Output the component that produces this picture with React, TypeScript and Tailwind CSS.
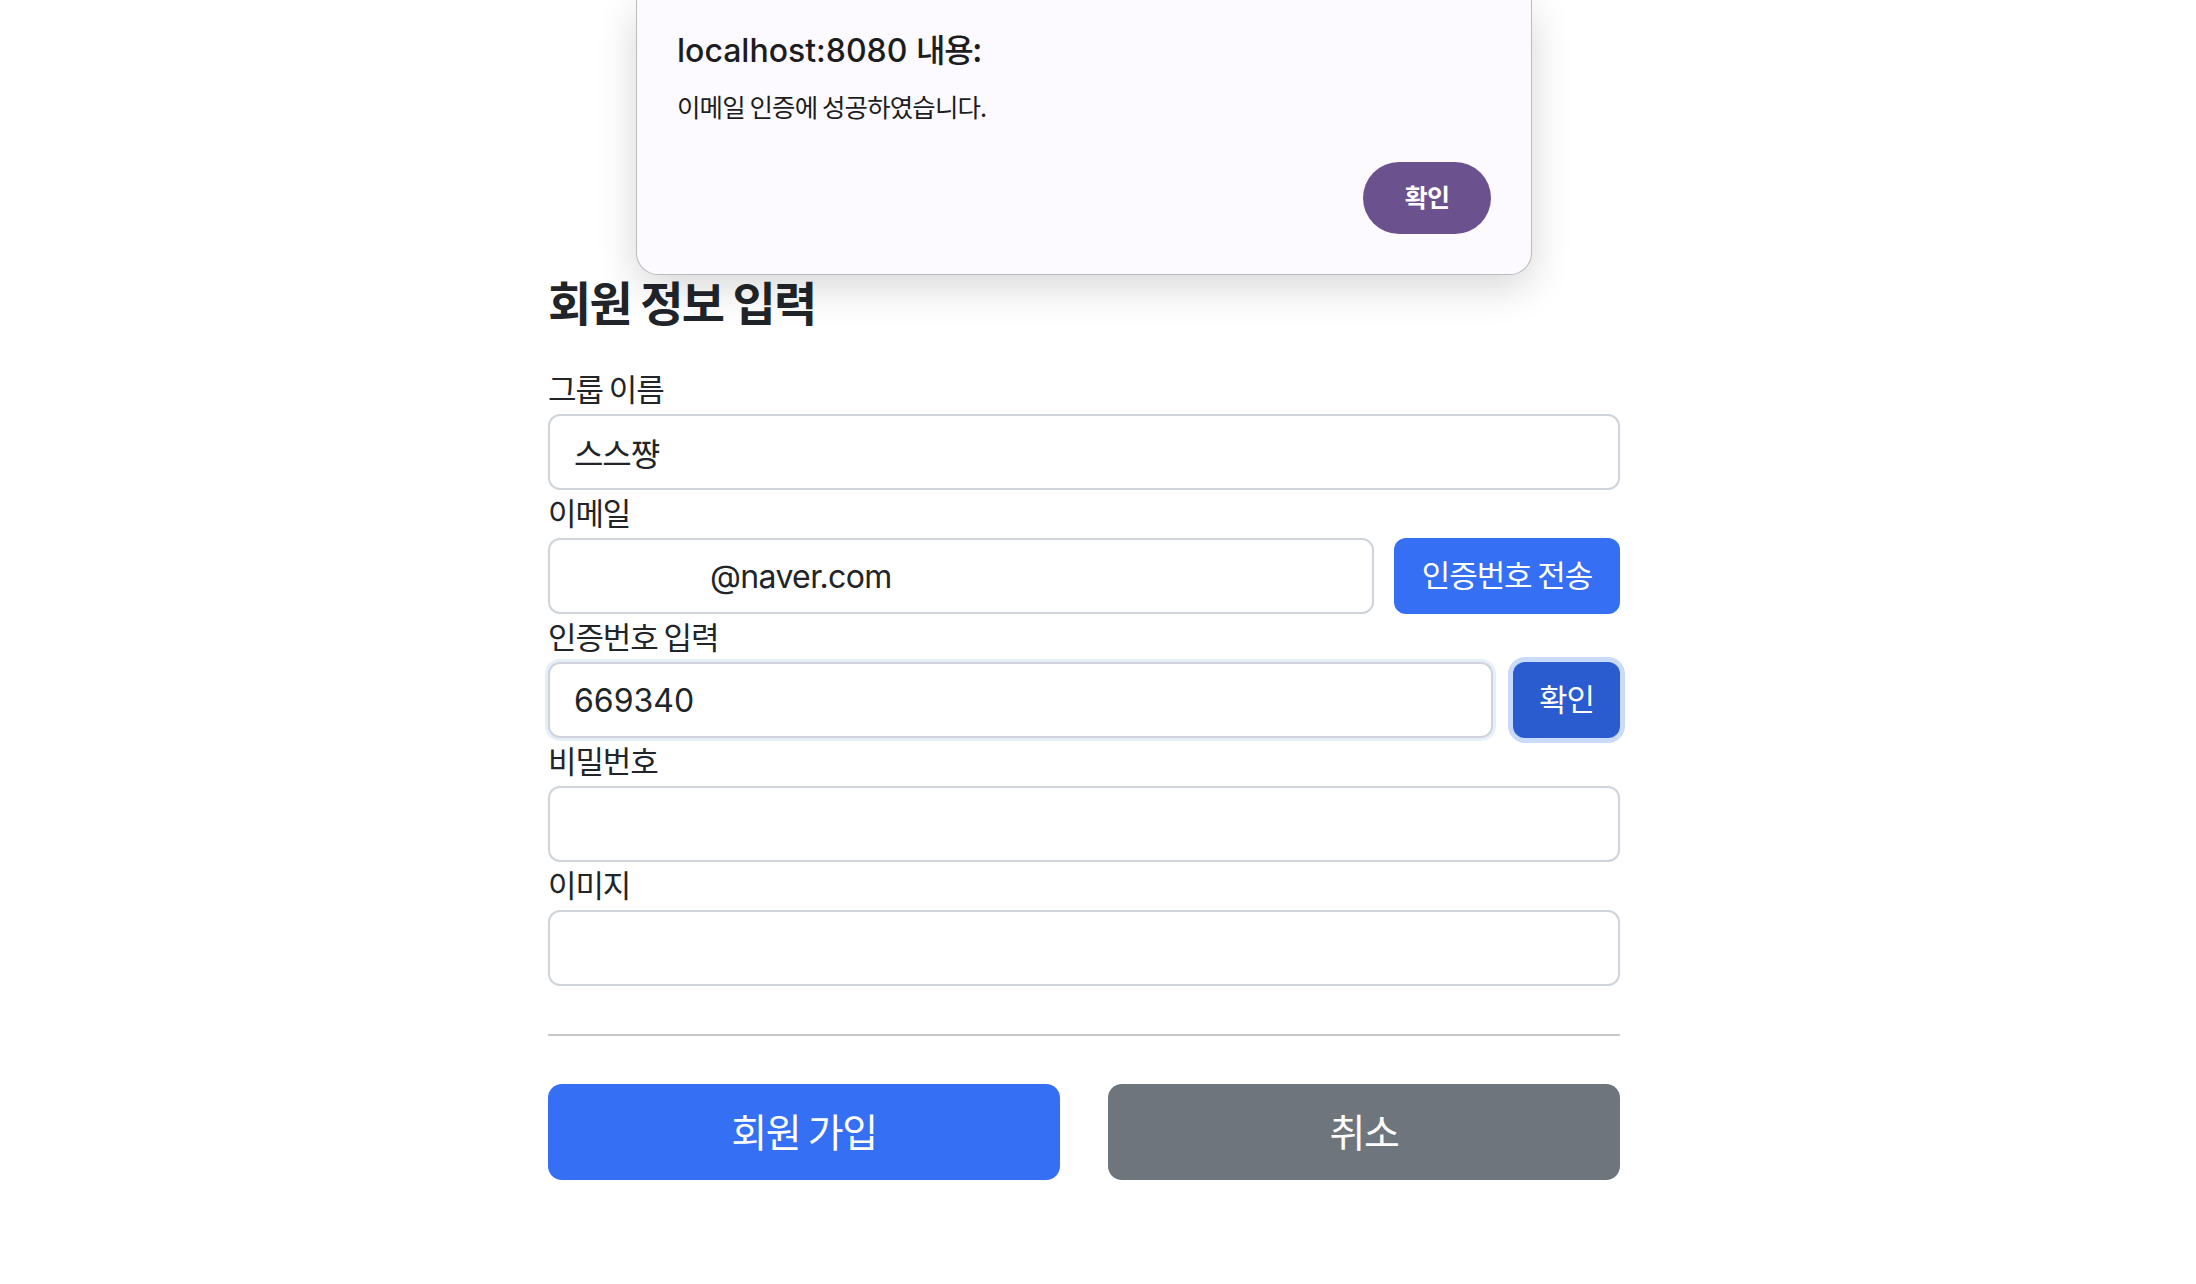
import { useState } from "react";

const ko = "font-['Noto_Sans_CJK_KR',sans-serif] tracking-[-0.035em]";
const latin = "font-['Inter','Noto_Sans_CJK_KR',sans-serif]";

function Label({ children }: { children: React.ReactNode }) {
  return (
    <label className={`block h-[48px] text-[31px] leading-[43px] text-[#212529] ${ko}`}>
      {children}
    </label>
  );
}

function AlertDialog() {
  return (
    <div className="absolute top-0 left-[636px] w-[896px] rounded-b-[22px] border border-t-0 border-black/25 bg-[#fcfafe] px-[40px] pt-[28px] pb-[40px] shadow-[0_12px_40px_rgba(0,0,0,0.16)]">
      <h2 className={`text-[32px] leading-[40px] font-medium text-[#1d1d1f] ${latin}`}>
        localhost:8080 <span className={ko}>내용:</span>
      </h2>
      <p className={`mt-[19px] text-[25.5px] leading-[32px] text-[#1d1d1f] ${ko}`}>
        이메일 인증에 성공하였습니다.
      </p>
      <div className="mt-[40px] flex justify-end">
        <button
          className={`h-[72px] w-[128px] rounded-full bg-[#6b528f] pb-[3px] text-[25px] font-bold text-white ${ko}`}
        >
          확인
        </button>
      </div>
    </div>
  );
}

export default function App() {
  const [group, setGroup] = useState("스스쨩");
  const [email, setEmail] = useState("@naver.com");
  const [code, setCode] = useState("669340");
  const [password, setPassword] = useState("");

  const inputBase =
    "h-[76px] w-full rounded-[12px] border-2 border-[#ced4da] bg-white px-[24px] text-[32px] text-[#212529] outline-none";

  return (
    <div className="relative min-h-screen w-full bg-white">
      <div className="w-[2168px]">
        <div className="mx-auto w-[1072px] pt-[273px] pb-[100px]">
          <h4 className={`mb-[35px] h-[58px] text-[47px] leading-[56px] font-semibold text-[#212529] ${ko}`}>
            회원 정보 입력
          </h4>

          <form onSubmit={(e) => e.preventDefault()}>
            <Label>그룹 이름</Label>
            <input
              value={group}
              onChange={(e) => setGroup(e.target.value)}
              className={`${inputBase} ${ko} text-[31px]`}
            />

            <Label>이메일</Label>
            <div className="flex gap-[20px]">
              <input
                value={email}
                onChange={(e) => setEmail(e.target.value)}
                className={`${inputBase} ${latin} flex-1 pl-[160px] tracking-[-0.02em]`}
              />
              <button
                type="button"
                className={`h-[76px] w-[226px] shrink-0 rounded-[12px] bg-[#346ff4] pb-[4px] text-[31px] text-white ${ko}`}
              >
                인증번호 전송
              </button>
            </div>

            <Label>인증번호 입력</Label>
            <div className="flex gap-[20px]">
              <input
                value={code}
                onChange={(e) => setCode(e.target.value)}
                className={`${inputBase} ${latin} flex-1 border-[#b4c7ea] shadow-[0_0_0_3px_#e7eefb]`}
              />
              <button
                type="button"
                className={`h-[76px] w-[107px] shrink-0 rounded-[12px] bg-[#2a5bcf] pb-[4px] text-[31px] text-white shadow-[0_0_0_5px_#c9dafb] ${ko}`}
              >
                확인
              </button>
            </div>

            <Label>비밀번호</Label>
            <input
              type="password"
              value={password}
              onChange={(e) => setPassword(e.target.value)}
              className={`${inputBase} ${latin}`}
            />

            <Label>이미지</Label>
            <input className={`${inputBase} ${latin}`} />

            <hr className="my-[48px] border-t-2 border-[#c8c8c8]" />

            <div className="grid grid-cols-2 gap-[48px]">
              <button
                type="submit"
                className={`h-[96px] rounded-[14px] bg-[#346ff4] pb-[4px] text-[39px] text-white ${ko}`}
              >
                회원 가입
              </button>
              <button
                type="button"
                className={`h-[96px] rounded-[14px] bg-[#6f757d] pb-[4px] text-[39px] text-white ${ko}`}
              >
                취소
              </button>
            </div>
          </form>
        </div>
      </div>

      <AlertDialog />
    </div>
  );
}
